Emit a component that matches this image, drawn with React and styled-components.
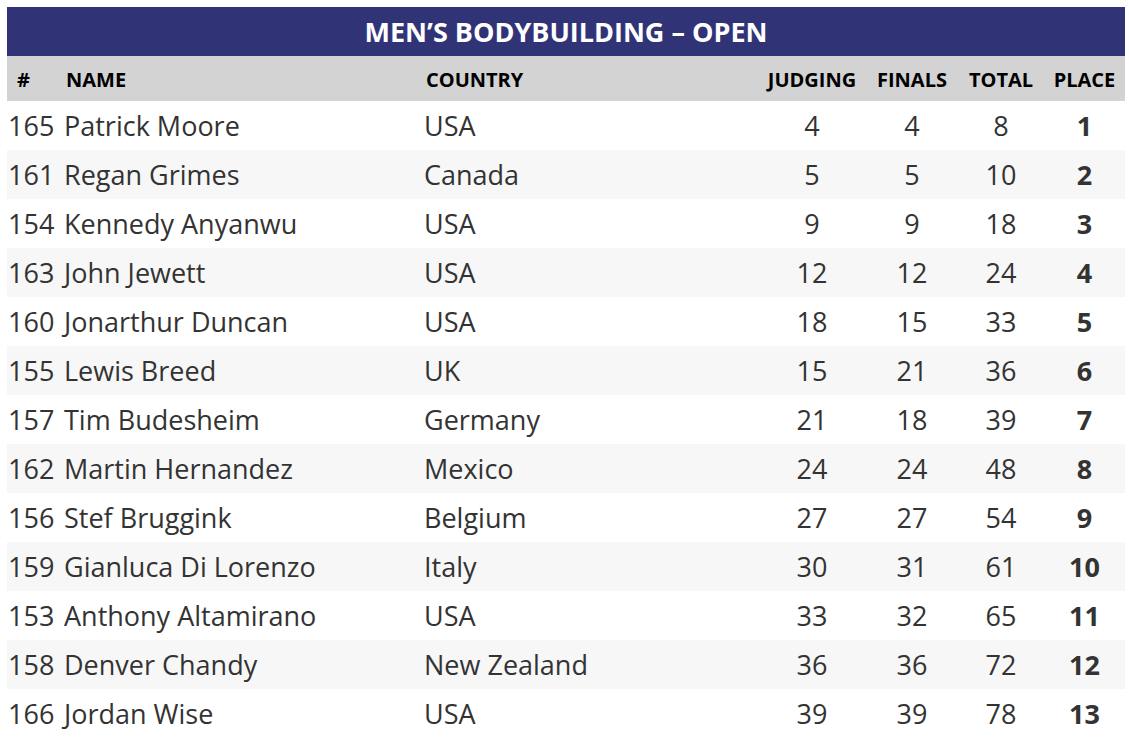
import styled, {createGlobalStyle} from 'styled-components'

const GlobalStyle = createGlobalStyle`
  body {
    margin: 0;
    background: #fff;
    font-family: 'Open Sans', 'Liberation Sans', sans-serif;
  }
`

const results = [
  [165, 'Patrick Moore', 'USA', 4, 4, 8, 1],
  [161, 'Regan Grimes', 'Canada', 5, 5, 10, 2],
  [154, 'Kennedy Anyanwu', 'USA', 9, 9, 18, 3],
  [163, 'John Jewett', 'USA', 12, 12, 24, 4],
  [160, 'Jonarthur Duncan', 'USA', 18, 15, 33, 5],
  [155, 'Lewis Breed', 'UK', 15, 21, 36, 6],
  [157, 'Tim Budesheim', 'Germany', 21, 18, 39, 7],
  [162, 'Martin Hernandez', 'Mexico', 24, 24, 48, 8],
  [156, 'Stef Bruggink', 'Belgium', 27, 27, 54, 9],
  [159, 'Gianluca Di Lorenzo', 'Italy', 30, 31, 61, 10],
  [153, 'Anthony Altamirano', 'USA', 33, 32, 65, 11],
  [158, 'Denver Chandy', 'New Zealand', 36, 36, 72, 12],
  [166, 'Jordan Wise', 'USA', 39, 39, 78, 13],
]

const Page = styled.div`
  padding: 7px 4px 0 7px;
`

const Table = styled.div`
  width: 1118px;
`

const Title = styled.div`
  height: 49px;
  background: #313377;
  color: #fff;
  font-weight: 700;
  font-size: 27px;
  display: flex;
  align-items: center;
  justify-content: center;
`

const Row = styled.div`
  display: grid;
  grid-template-columns: 55px 360px 340px 100px 100px 78px 85px;
  align-items: center;
  box-sizing: border-box;
  height: ${p => (p.$head ? '45px' : '49px')};
  padding-top: ${p => (p.$head ? '3px' : '2px')};
  background: ${p => (p.$head ? '#d3d3d3' : p.$shade ? '#f7f7f7' : '#fff')};
  color: ${p => (p.$head ? '#000' : '#333')};
  font-size: ${p => (p.$head ? '20px' : '27px')};
  font-weight: ${p => (p.$head ? 700 : 400)};
  line-height: 1.2;
`

const Cell = styled.div`
  white-space: nowrap;
  padding-left: ${p => p.$pad || '2px'};
  text-align: ${p => (p.$center ? 'center' : 'left')};
  font-weight: ${p => (p.$bold ? 700 : 'inherit')};
`

const App = () => (
  <Page>
    <GlobalStyle />
    <Table>
      <Title>MEN’S BODYBUILDING – OPEN</Title>
      <Row $head>
        <Cell $pad="10px">#</Cell>
        <Cell $pad="4px">NAME</Cell>
        <Cell $pad="4px">COUNTRY</Cell>
        <Cell $center $pad="0">JUDGING</Cell>
        <Cell $center $pad="0">FINALS</Cell>
        <Cell $center $pad="0">TOTAL</Cell>
        <Cell $center $pad="4px">PLACE</Cell>
      </Row>
      {results.map(([num, name, country, judging, finals, total, place], i) => (
        <Row key={num} $shade={i % 2 === 1}>
          <Cell $pad="1px">{num}</Cell>
          <Cell>{name}</Cell>
          <Cell>{country}</Cell>
          <Cell $center $pad="0">{judging}</Cell>
          <Cell $center $pad="0">{finals}</Cell>
          <Cell $center $pad="0">{total}</Cell>
          <Cell $center $bold $pad="4px">{place}</Cell>
        </Row>
      ))}
    </Table>
  </Page>
)

export default App
